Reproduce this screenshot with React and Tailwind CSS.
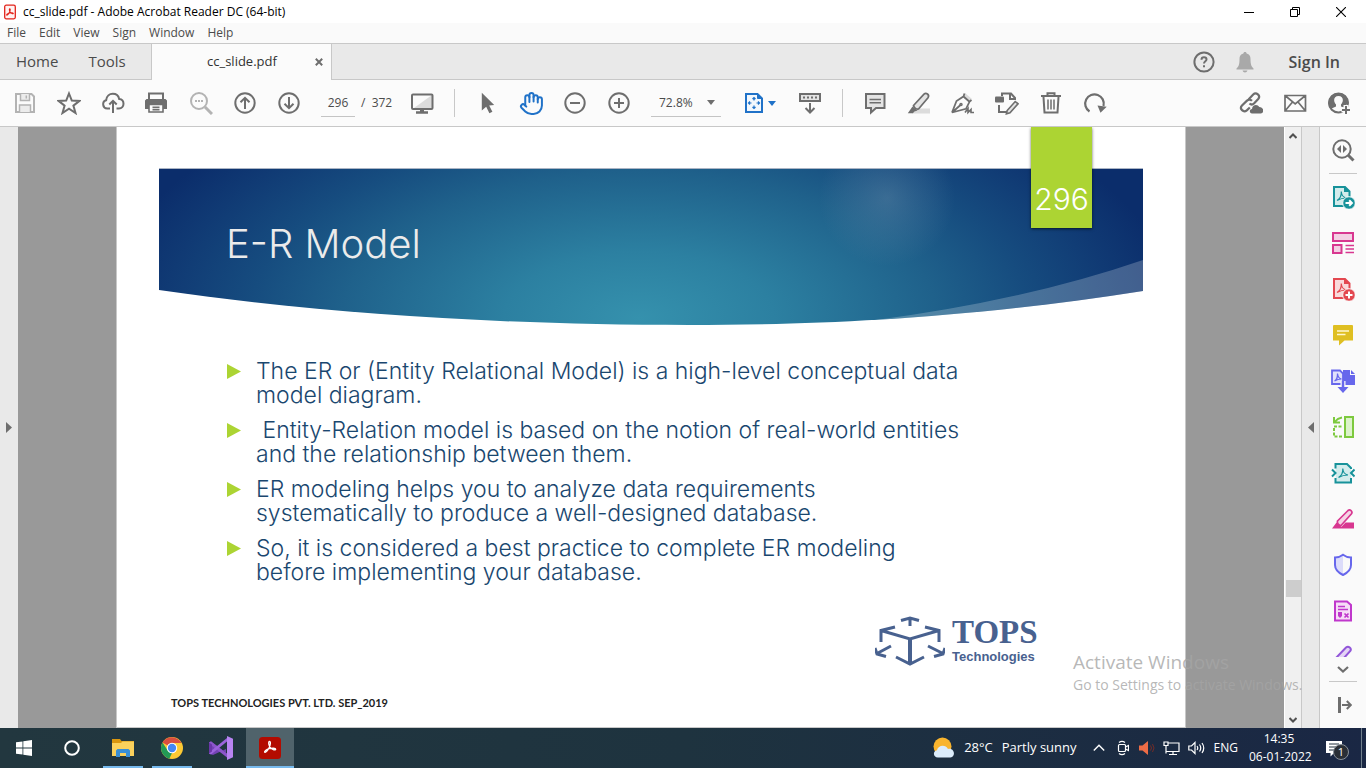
import React from "react";
import { Hand } from "lucide-react";

function Icon({ children, color = "#6e6e6e", size = 24, className = "" }) {
  return (
    <svg
      width={size}
      height={size}
      viewBox="0 0 24 24"
      fill="none"
      stroke={color}
      strokeWidth="2"
      className={"shrink-0 " + className}
      aria-hidden="true"
    >
      {children}
    </svg>
  );
}

function ToolButton({ label, children }) {
  return (
    <button type="button" aria-label={label} className="flex h-10 w-11 shrink-0 items-center justify-center">
      {children}
    </button>
  );
}

function TitleBar() {
  return (
    <header className="flex h-[23px] shrink-0 items-center justify-between bg-white">
      <div className="flex items-center gap-[7px] pl-1">
        <svg width="12" height="16" viewBox="0 0 12 16" aria-hidden="true">
          <rect x="0.7" y="1.200" width="10.600" height="13.600" rx="1.500" fill="#fff3f2" stroke="#e2231a" strokeWidth="1.300" />
          <path d="M5.700 4.800c1 0 .4 2.600-.5 4-1 1.700-2 2.600-2.500 2.200-.4-.6 1.500-1.700 3-2 1.800-.3 3.600-.2 3.600.5s-1.800.2-2.800-1C5.500 7.500 5 4.800 5.700 4.800z" fill="none" stroke="#e2231a" strokeWidth="1.100" />
        </svg>
        <h1 className="text-[12px] leading-4 text-black">cc_slide.pdf - Adobe Acrobat Reader DC (64-bit)</h1>
      </div>
      <div className="flex items-center pr-[2px]">
        <button type="button" aria-label="Minimize" className="flex h-[22px] w-[46px] items-center justify-center">
          <svg width="10" height="10" stroke="#000" aria-hidden="true"><path d="M0 5.500h10" /></svg>
        </button>
        <button type="button" aria-label="Restore" className="flex h-[22px] w-[46px] items-center justify-center">
          <svg width="10" height="10" stroke="#000" fill="none" aria-hidden="true">
            <path d="M.5 2.500h7v7h-7zM2.500 2.500v-2h7v7h-2" />
          </svg>
        </button>
        <button type="button" aria-label="Close" className="flex h-[22px] w-[46px] items-center justify-center">
          <svg width="10" height="10" stroke="#000" strokeWidth="1.100" aria-hidden="true"><path d="M0 0l10 10M10 0L0 10" /></svg>
        </button>
      </div>
    </header>
  );
}

function MenuBar() {
  return (
    <nav className="flex h-5 shrink-0 items-center gap-[13px] bg-[#fafafa] pl-[7px] text-[12px] leading-4 text-[#4b4b4b]">
      {["File", "Edit", "View", "Sign", "Window", "Help"].map((item) => (
        <button type="button" key={item}>{item}</button>
      ))}
    </nav>
  );
}

function TabBar() {
  return (
    <div className="flex h-[37px] shrink-0 border-t border-[#c8c8c8] bg-[#e9e9e9] text-[#4b4b4b]">
      <div className="flex w-[151px] items-center gap-[30px] border-b border-[#c8c8c8] pl-4 text-[15px]">
        <button type="button">Home</button>
        <button type="button">Tools</button>
      </div>
      <div className="flex w-[181px] items-center border-x border-[#c8c8c8] bg-[#fbfbfb] pr-[6px] pl-[55px]">
        <span className="flex-1 text-[13px] text-[#323232]">cc_slide.pdf</span>
        <button type="button" aria-label="Close tab" className="flex size-3 items-center justify-center">
          <svg width="8" height="8" stroke="#6e6e6e" strokeWidth="2" aria-hidden="true"><path d="M.8.8l6.400 6.400M7.200.8L.8 7.200" /></svg>
        </button>
      </div>
      <div className="flex flex-1 items-center justify-end border-b border-[#c8c8c8] pr-[26px]">
        <button type="button" aria-label="Help" className="mr-[17px]">
          <Icon>
            <circle cx="12" cy="12" r="9.600" />
            <path d="M9.500 9.700c0-3.200 5-3 5-.2 0 1.800-2.500 1.900-2.500 4" />
            <path d="M12 15.300v2" />
          </Icon>
        </button>
        <button type="button" aria-label="Notifications" className="mr-8">
          <Icon color="none">
            <path fill="#a9a9a9" d="M12 2c1 0 1.600.7 1.600 1.600C16.500 4.400 17.500 6.500 17.500 9c0 6 1 7.500 3 9.500v1h-17v-1c2-2 3-3.500 3-9.500 0-2.500 1-4.600 3.900-5.400C10.400 2.700 11 2 12 2zM9.500 20.500h5c-.5 1.300-1.300 2-2.500 2s-2-.7-2.500-2z" />
          </Icon>
        </button>
        <button type="button" className="text-[16px] font-semibold">Sign In</button>
      </div>
    </div>
  );
}

function Toolbar() {
  return (
    <div className="flex h-[47px] shrink-0 items-center overflow-hidden border-b border-[#c8c8c8] bg-[#fbfbfb] pl-[3px] text-[12px] text-[#4b4b4b]">
      <ToolButton label="Save">
        <Icon color="#b3b3b3">
          <path d="M3 3h15.500L21 5.500V21H3z" />
          <path fill="#ececec" strokeWidth="1.500" d="M7.500 3v6.500h9V3M6.500 21v-7h11v7" />
          <path strokeWidth="1.500" d="M13.300 4.500v3" />
        </Icon>
      </ToolButton>
      <ToolButton label="Add to favourites">
        <Icon><path d="M12 2.500l2.800 7.100 7.600.3-6 4.700 2.100 7.400L12 17.700 5.500 22l2.100-7.400-6-4.700 7.600-.3z" /></Icon>
      </ToolButton>
      <ToolButton label="Upload">
        <Icon>
          <path d="M9 17.500H6.200a4.200 4.200 0 0 1-1.100-8.200C5.500 5 8.500 2.800 11.800 2.800c3.400 0 5.700 2 6.400 5.200 2.500.2 4.300 2.200 4.300 4.800s-1.800 4.700-4.500 4.700h-2.500" />
          <path d="M12 22V9.800M8.300 13.500l3.700-3.700 3.700 3.700" />
        </Icon>
      </ToolButton>
      <ToolButton label="Print">
        <Icon>
          <path d="M4 8V2.500h14V8" />
          <path fill="#6e6e6e" stroke="none" d="M1.500 8h19L22 9.500V18h-4v-4H4v4H0V9.500z" />
          <path d="M4 13.500h14V21H4zM7.500 16.300h7M7.500 18.600h7" strokeWidth="1.600" />
        </Icon>
      </ToolButton>
      <ToolButton label="Find text">
        <Icon color="#b3b3b3">
          <circle cx="10" cy="10" r="8" />
          <path d="M6 10h2M9 10h2M12 10h2" />
          <path strokeWidth="3" d="M16 16l7 7" />
        </Icon>
      </ToolButton>
      <ToolButton label="Previous page">
        <Icon><circle cx="12" cy="12" r="9.700" /><path d="M12 18V7M7.500 11.300L12 6.800l4.500 4.500" /></Icon>
      </ToolButton>
      <ToolButton label="Next page">
        <Icon><circle cx="12" cy="12" r="9.700" /><path d="M12 6v11M7.500 12.700l4.500 4.500 4.500-4.500" /></Icon>
      </ToolButton>
      <div className="ml-[10px] flex items-center">
        <input aria-label="Page number" defaultValue="296" className="h-7 w-[34px] border-b border-[#c4c4c4] bg-transparent text-center" />
        <span className="ml-[6px] w-[31px] whitespace-pre">/  372</span>
      </div>
      <div className="ml-2">
        <ToolButton label="Read mode">
          <Icon>
            <path fill="#dcdcdc" stroke="none" d="M22 4v13H4z" />
            <rect x="2" y="3.500" width="20.500" height="14.500" rx="1" />
            <path strokeWidth="2.500" d="M6 21.500h12" /><path strokeWidth="4" d="M12 18v3" />
          </Icon>
        </ToolButton>
      </div>
      <div className="ml-[10px] h-7 w-px shrink-0 bg-[#c8c8c8]" />
      <div className="ml-[10px] flex">
        <ToolButton label="Select">
          <Icon><path fill="#6e6e6e" stroke="none" d="M6.800 1.800l12.400 12.300-5 .4 3.200 6.200-3 1.500-3.200-6.400-4.400 3.600z" /></Icon>
        </ToolButton>
        <ToolButton label="Pan"><Hand size={25} color="#2072c8" strokeWidth={1.900} aria-hidden="true" /></ToolButton>
        <ToolButton label="Zoom out"><Icon><circle cx="12" cy="12" r="9.700" /><path d="M7 12h10" /></Icon></ToolButton>
        <ToolButton label="Zoom in"><Icon><circle cx="12" cy="12" r="9.700" /><path d="M7 12h10M12 7v10" /></Icon></ToolButton>
      </div>
      <div className="ml-[10px] flex h-7 w-[70px] items-center border-b border-[#c4c4c4]">
        <select aria-label="Zoom level" defaultValue="72.8%" className="w-[52px] appearance-none bg-transparent pl-2">
          <option>72.8%</option>
          <option>100%</option>
        </select>
        <svg width="8" height="5" className="ml-1" fill="#6e6e6e" aria-hidden="true"><path d="M0 0h8L4 5z" /></svg>
      </div>
      <button type="button" aria-label="Fit page" className="ml-[21px] flex h-10 items-center gap-[2px]">
        <Icon color="#2072c8">
          <path fill="#f3f8fd" d="M4 3h11.500L20 7.500V21H4z" />
          <path fill="#2072c8" d="M15.500 3v4.500H20" strokeWidth="1" />
          <path strokeWidth="1.200" d="M12 6.500v3M12 14.500v3M6.500 12h3M14.500 12h3M10.500 8L12 6.500 13.500 8M10.500 16l1.500 1.500 1.500-1.500M8 10.500L6.500 12 8 13.500M16 10.500l1.500 1.500-1.500 1.500" />
        </Icon>
        <svg width="8" height="5" fill="#2072c8" aria-hidden="true"><path d="M0 0h8L4 5z" /></svg>
      </button>
      <div className="ml-3">
        <ToolButton label="Scroll mode">
          <Icon>
            <path fill="#e4e4e4" d="M2 3h20v7H2z" />
            <path d="M5 6.500h2M9 6.500h2M13 6.500h2M17 6.500h2" />
            <path d="M12 12v9M7.500 17l4.500 4.500 4.500-4.500" />
          </Icon>
        </ToolButton>
      </div>
      <div className="ml-[10px] h-7 w-px shrink-0 bg-[#c8c8c8]" />
      <div className="ml-[10px] flex">
        <ToolButton label="Comment">
          <Icon>
            <path fill="#e4e4e4" d="M3 3h18.500v14H13l-5 4.500V17H3z" />
            <path strokeWidth="1.400" d="M6.500 8.500h11.500M6.500 11.800h11.500" />
          </Icon>
        </ToolButton>
        <ToolButton label="Highlight">
          <Icon>
            <path fill="#dcdcdc" stroke="none" d="M5 22.500l6-5h12v5z" />
            <path fill="#e4e4e4" strokeWidth="1.700" d="M6.500 14.500L17 3.200c2-2 6 .3 4 3.600L11.500 18c-2 .5-4.500-1-5-3.500z" />
            <path fill="#6e6e6e" stroke="none" d="M5.500 15.500l5 4-3 .9-1.700 1.800H.8z" />
          </Icon>
        </ToolButton>
        <ToolButton label="Draw signature">
          <Icon>
            <path fill="#dcdcdc" stroke="none" d="M14 2l7 6-3 3-6-6z" />
            <path strokeWidth="1.800" d="M1 21.500L5.500 10l7-4.500 6 5.300-3.500 7-14 3.700L9.500 14M13.500 2.500l-1 3M18 11l2.500-2" />
            <circle cx="10" cy="13.500" r="1" strokeWidth="1.500" />
            <path strokeWidth="1.600" d="M14 21.500l3-4v4l3-3v3h3" />
          </Icon>
        </ToolButton>
        <ToolButton label="Fill and sign">
          <Icon>
            <path d="M7 5V2.500h9L20 7v2M15 3v5h5M4 14v7h8" />
            <rect x="0" y="5.500" width="9" height="6" rx="1" fill="#6e6e6e" stroke="none" />
            <path fill="#e4e4e4" strokeWidth="1.600" d="M12.200 19.500l8-9 2.800 2.300-8 9-3.600 1z" />
          </Icon>
        </ToolButton>
        <ToolButton label="Delete">
          <Icon>
            <path d="M2 5h20M8.500 4.500V2.300h7v2.200M4.500 6l1 15.500h13l1-15.500" />
            <path strokeWidth="1.500" d="M9 8.500v10M12 8.500v10M15 8.500v10" />
          </Icon>
        </ToolButton>
        <ToolButton label="Rotate">
          <Icon>
            <path strokeWidth="2.200" d="M6.500 20.500A9.300 9.300 0 1 1 20.500 15" />
            <path fill="#6e6e6e" stroke="none" d="M14.500 14.500l9.200 1.200-6.200 6z" />
          </Icon>
        </ToolButton>
      </div>
      <div className="ml-auto flex pr-[5px]">
        <ToolButton label="Share link">
          <Icon>
            <path d="M9.500 8.500l4.700-5c3-2.900 7.800 1.200 5 4.500l-4 4.300c-1.500 1.500-3.500 1.300-4.700.2M13 9.800c-1.500-1.500-3.500-1.500-5-.2l-5 4.900c-3 3.300 1.500 7.500 4.800 4.800l3-2.800" strokeWidth="2.200" />
            <path fill="#6e6e6e" stroke="none" d="M13 22.500c-2.800-.3-3-4 0-4.500.2-4.500 5.500-5.500 7.300-2 5 0 5 6.500 1.500 6.500z" />
          </Icon>
        </ToolButton>
        <ToolButton label="Send by email">
          <Icon><path strokeWidth="1.700" d="M2 4.500h20.500v15.500H2zM2 4.500l10.200 8.500 10.300-8.500M2 20l7.500-9M22.500 20L15 11" /></Icon>
        </ToolButton>
        <ToolButton label="Invite people">
          <Icon>
            <circle cx="11.500" cy="12" r="9.500" />
            <path fill="#6e6e6e" stroke="none" d="M11.500 2a10 10 0 0 0-8 16l5.500-2.500v-2c-3-3.500-2.500-8.500 2.500-8.500s5.500 5 2.500 8.500v2l3 1 4.500-5A10 10 0 0 0 11.500 2z" />
            <path stroke="#fbfbfb" strokeWidth="5" d="M19 14v10M14.500 19h10" />
            <path d="M19 15v8M15 19h8" />
          </Icon>
        </ToolButton>
      </div>
    </div>
  );
}

const bullets = [
  "The ER or (Entity Relational Model) is a high-level conceptual data\nmodel diagram.",
  "\u00a0Entity-Relation model is based on the notion of real-world entities\nand the relationship between them.",
  "ER modeling helps you to analyze data requirements\nsystematically to produce a well-designed database.",
  "So, it is considered a best practice to complete ER modeling\nbefore implementing your database.",
];

function Slide() {
  return (
    <article className="relative mx-[98px] flex-1 overflow-hidden border-x border-b border-[#c8c8c8] bg-white">
      <header className="relative mx-[42px] mt-[41px] h-[158px] pt-[52px] pl-[67px]">
        <svg className="absolute inset-0 size-full" viewBox="0 0 984 158" preserveAspectRatio="none" aria-hidden="true">
          <defs>
            <radialGradient id="sea" gradientUnits="userSpaceOnUse" cx="0" cy="0" r="1" gradientTransform="translate(480 150) scale(540 265)">
              <stop offset="0" stopColor="#3591ad" />
              <stop offset="0.25" stopColor="#2c80a1" />
              <stop offset="0.55" stopColor="#1f618b" />
              <stop offset="0.72" stopColor="#164c7f" />
              <stop offset="0.88" stopColor="#103a74" />
              <stop offset="1" stopColor="#0b2d6b" />
            </radialGradient>
            <radialGradient id="glow" gradientUnits="userSpaceOnUse" cx="728" cy="30" r="68">
              <stop offset="0" stopColor="#7f9db5" stopOpacity="0.32" />
              <stop offset="0.6" stopColor="#6f93b0" stopOpacity="0.15" />
              <stop offset="1" stopColor="#6f93b0" stopOpacity="0" />
            </radialGradient>
            <clipPath id="banner">
              <path d="M0 0H984V123C800 152 650 157 530 157C330 157 150 144 0 122z" />
            </clipPath>
          </defs>
          <g clipPath="url(#banner)">
            <path fill="url(#sea)" d="M0 0h984v158H0z" />
            <path fill="url(#glow)" d="M640 0h180v110H640z" />
            <path fill="#fff" fillOpacity="0.22" d="M710 153Q865 133 984 92V158H710z" />
            <path fill="#aab4c4" d="M0 0h984v1H0z" />
          </g>
        </svg>
        <h2 className="relative font-['Inter',sans-serif] text-[40px] leading-12 font-light text-[#ebebeb]">E-R Model</h2>
      </header>
      <div className="absolute top-0 right-[93px] flex h-[101px] w-[61px] items-end justify-center bg-[#acd433] pb-[13px] font-['Inter',sans-serif] text-[30px] leading-8 font-light text-white shadow-sm shadow-black/50">
        296
      </div>
      <ul className="mt-[33px] ml-[110px] flex flex-col gap-[11px] font-['Inter',sans-serif] text-[23px] leading-6 font-light text-[#1a476f]">
        {bullets.map((text) => (
          <li key={text} className="flex">
            <svg width="14" height="15" className="mt-[5px] mr-[15px] shrink-0" fill="#acd433" aria-hidden="true"><path d="M0 0l14 7.500L0 15z" /></svg>
            <span className="whitespace-pre-line">{text}</span>
          </li>
        ))}
      </ul>
      <div className="mt-[32px] mr-[148px] flex items-center justify-end gap-[7px] text-[#48618f]">
        <svg width="70" height="51" viewBox="0 0 70 51" fill="none" stroke="#48618f" strokeWidth="3" aria-hidden="true">
          <path d="M6 14.500l29 8.500 29-8.500M20 11L6 14.500V26M50 11l14 3.500V26" />
          <path d="M35 23v25" strokeWidth="4" />
          <path d="M21 41l14 7 14-7M26 4.500l9-2.500 9 2.500M35 2v8M16 30L2 37.500M0 32l2 6 9 2.500M53 30l15 7.500M70 32l-2 6-9 2.500" />
        </svg>
        <div className="w-[85px]">
          <div className="font-['Liberation_Serif',serif] text-[33px] leading-[30px] font-bold">TOPS</div>
          <div className="font-['Liberation_Sans',sans-serif] text-[13px] leading-5 font-bold">Technologies</div>
        </div>
      </div>
      <p className="mt-[28px] ml-[54px] font-['Lato',sans-serif] text-[11px] leading-4 font-bold text-[#222]">TOPS TECHNOLOGIES PVT. LTD. SEP_2019</p>
    </article>
  );
}

function ScrollBar() {
  return (
    <div className="flex w-[17px] shrink-0 flex-col items-center border-r border-[#c8c8c8] bg-[#f0f0f0]">
      <svg width="8" height="6" className="mt-[6px]" fill="none" stroke="#505050" strokeWidth="2" aria-hidden="true"><path d="M.5 5L4 1.500 7.500 5" /></svg>
      <div className="mt-auto h-[17px] w-[15px] bg-[#cdcdcd]" />
      <svg width="8" height="6" className="mt-[120px] mb-[5px]" fill="none" stroke="#505050" strokeWidth="2" aria-hidden="true"><path d="M.5 1L4 4.500 7.500 1" /></svg>
    </div>
  );
}

const pdfBase = (color, tint) => (
  <>
    <path fill={tint} stroke={color} d="M3 2h11l4.500 4.500V21H3z" />
    <path fill={color} stroke="none" d="M13 1.500V7h6z" />
    <path d="M6 15.500c3.500-2 4.500-5 4.300-9 .4 4.500 1.700 6 5.200 6.500-3.500 0-6 .5-9.500 2.500z" stroke={color} strokeWidth="1.200" />
  </>
);

const sideTools = [
  ["Export PDF", <>{pdfBase("#17929a", "#d3ecec")}<circle cx="18" cy="18" r="6.300" fill="#17929a" stroke="#fafafa" strokeWidth="1" /><path stroke="#fff" d="M14.500 18h6M18.200 15.300l2.700 2.700-2.700 2.700" /></>],
  ["Edit PDF", <g stroke="#d83790"><path fill="#f3d0e4" d="M2 2h20v8H2zM2 14h8.500v8H2z" /><path strokeWidth="1.300" d="M14.500 14.500H23M14.500 18H23M14.500 21.500H23" /></g>],
  ["Create PDF", <>{pdfBase("#e34850", "#f9d9da")}<circle cx="18" cy="18" r="6.300" fill="#e34850" stroke="#fafafa" strokeWidth="1" /><path stroke="#fff" d="M14.500 18h7M18 14.500v7" /></>],
  ["Comment", <><path fill="#dfbf22" stroke="none" d="M3 2h18a1 1 0 0 1 1 1v14.500H13.500L8 22.500v-5H2V3a1 1 0 0 1 1-1z" /><path stroke="#fff8d0" strokeWidth="1.500" d="M6 8h12M6 11.500h8.500" /></>],
  ["Combine files", <g stroke="#6767ec"><path fill="#6767ec" stroke="none" d="M12 1h7v5h5v10H12z" /><path fill="#6767ec" stroke="none" d="M20 1l4 4h-4z" /><path fill="#e1e1fb" strokeWidth="1.800" d="M1 1.500h8l3 3V15H1z" /><path strokeWidth="1.200" d="M3.500 12c3-1.500 3-4 3-7.500.5 4 1.500 5 4 5.500-3 0-4.500.5-7 2z" /><path stroke="#fafafa" strokeWidth="5" d="M12 12v7" /><path strokeWidth="2.500" d="M12 12v8" /><path fill="#6767ec" stroke="none" d="M6.500 18h11L12 24z" /></g>],
  ["Organize pages", <g stroke="#7dc93e"><path fill="#dcf3ca" d="M14 2h8v20h-8z" /><path strokeDasharray="3 1.500" d="M11 21.500H3V13M3 11.500h7.500" /><path d="M11 2.500C8 3 6 4 4 6.500M3 2v5.500h6" /></g>],
  ["Compress PDF", <g stroke="#17929a"><path fill="#d3ecec" stroke="none" d="M4.500 3H16l4 4v14h-15z" /><path d="M4.500 7.500V3H16l4 4v1M4.500 17v4.500H20V17" /><path d="M7.500 16.500c3.500-2 4.500-5 4.300-9 .4 4.500 1.700 6 5.200 6.500-3.500 0-6 .5-9.500 2.500z" strokeWidth="1.200" /><path d="M1 8.500L4.500 12 1 15.500M23.500 8.500L20 12l3.500 3.500" /></g>],
  ["Redact", <g stroke="#d83790"><path fill="#d83790" stroke="none" d="M1 21.500l4.500-6 5 4.200 4-4.200h8.500v6z" /><path fill="#f5d4e6" strokeWidth="1.700" d="M6.500 14L17 3.500c2-1.800 5 .8 3.500 3.200L10 18.500c-1.800.2-4-1.500-3.500-4.500z" /></g>],
  ["Protect", <><path fill="#dcdcfa" stroke="none" d="M12 2v20C6 19 4 16 4 12V5c3 0 5-1 8-3z" /><path stroke="#6767ec" d="M12 1.800c2.500 1.900 5 2.700 8 2.700V12c0 4.500-3 7.500-8 10-5-2.500-8-5.500-8-10V4.500c3 0 5.500-.8 8-2.700z" /></>],
  ["Prepare form", <g stroke="#c038cc"><path fill="#f6dcf7" d="M4 2.500h12L20 6v15.500H4z" /><path strokeWidth="1.500" d="M7 7.500h7M7 10.500h10" /><path fill="#c038cc" stroke="none" d="M7 13h4v4l-2 2-2-2z" /><path strokeWidth="1.700" d="M13.500 14.500l4 4M17.500 14.500l-4 4" /></g>],
];

function SideTools() {
  return (
    <aside className="flex w-[47px] shrink-0 flex-col items-center border-l border-[#c8c8c8] bg-[#fafafa]">
      <button type="button" aria-label="Search tools" className="flex h-[46px] w-full shrink-0 items-center justify-center">
        <Icon>
          <circle cx="11" cy="11" r="8.700" />
          <path fill="#6e6e6e" stroke="none" d="M10 7v8l-4-4zM12 7v8l4-4z" />
          <path strokeWidth="3" d="M17 17l5.500 5.500" />
        </Icon>
      </button>
      <div className="h-px w-7 shrink-0 bg-[#c8c8c8]" />
      {sideTools.map(([label, art]) => (
        <button type="button" key={label} aria-label={label} className="flex h-[46px] w-full shrink-0 items-center justify-center">
          <Icon>{art}</Icon>
        </button>
      ))}
      <button type="button" aria-label="Fill and sign" className="flex h-[23px] w-full shrink-0 items-end justify-center overflow-hidden">
        <svg width="24" height="12" viewBox="0 0 24 12" fill="#e4d4f5" stroke="#9256d9" strokeWidth="2" aria-hidden="true"><path d="M4 14L15 2.500c2.500-2 6 .8 4.300 3.500L12 14z" /></svg>
      </button>
      <button type="button" aria-label="More tools" className="flex h-[24px] w-full shrink-0 items-center justify-center">
        <svg width="12" height="7" fill="none" stroke="#6e6e6e" strokeWidth="2.200" aria-hidden="true"><path d="M1 1l5 4.500L11 1" /></svg>
      </button>
      <div className="h-px w-7 shrink-0 bg-[#c8c8c8]" />
      <button type="button" aria-label="Collapse pane" className="flex w-full flex-1 items-center justify-center">
        <svg width="14" height="16" className="ml-1" fill="none" stroke="#6e6e6e" strokeWidth="2" aria-hidden="true"><path strokeWidth="3" d="M1.500 0v16" /><path d="M4 8h9M8.800 4l4 4-4 4" /></svg>
      </button>
    </aside>
  );
}

function TaskButton({ label, open, active, children }) {
  return (
    <button
      type="button"
      aria-label={label}
      className={"flex h-full w-12 flex-col items-center " + (active ? "bg-[#50636b]" : "")}
    >
      <span className="flex flex-1 items-center pt-px">{children}</span>
      <span className={"h-[2px] " + (active ? "w-12 bg-[#76b9ed]" : open ? "w-10 bg-[#76b9ed]" : "w-10")} />
    </button>
  );
}

function TaskBar() {
  return (
    <footer className="flex h-10 shrink-0 items-center bg-linear-to-r from-[#22373f] via-[#1e333f] to-[#1a2744] text-[12px] text-white">
      <TaskButton label="Start">
        <svg width="16" height="16" viewBox="0 0 16 16" fill="#fff" aria-hidden="true"><path d="M0 2.300l6.500-.9v6.200H0zM7.300 1.300L16 0v7.600H7.300zM0 8.400h6.500v6.200L0 13.700zM7.300 8.400H16V16l-8.700-1.300z" /></svg>
      </TaskButton>
      <TaskButton label="Cortana">
        <svg width="16" height="16" fill="none" stroke="#fff" strokeWidth="2" aria-hidden="true"><circle cx="8" cy="8" r="6.800" /></svg>
      </TaskButton>
      <div className="ml-[3px] flex h-full gap-px">
        <TaskButton label="File Explorer" open>
          <svg width="22" height="18" viewBox="0 0 22 18" aria-hidden="true">
            <path fill="#d9960f" d="M0 0h8l1.500 2H22v6H0z" />
            <path fill="#fbd15c" d="M0 4h9l1.500-1.500H22V17H0z" />
            <path fill="#3a8fd4" d="M4 18v-6.500l1.500-1.500h11l1.500 1.500V18h-4v-4H8v4z" />
          </svg>
        </TaskButton>
        <TaskButton label="Chrome" open>
          <svg width="22" height="22" viewBox="0 0 22 22" aria-hidden="true">
            <circle cx="11" cy="11" r="11" fill="#fcc934" />
            <path fill="#d94e3f" d="M11 11L1.500 5.500a11 11 0 0 1 19 .5H11z" />
            <path fill="#229a56" d="M1.500 5.500l5.200 8L11 16l-2.700 5.700A11 11 0 0 1 1.500 5.500z" />
            <circle cx="11" cy="11" r="5.200" fill="#fff" /><circle cx="11" cy="11" r="4.200" fill="#4486f4" />
          </svg>
        </TaskButton>
        <TaskButton label="Visual Studio">
          <svg width="24" height="24" viewBox="0 0 24 24" aria-hidden="true">
            <path fill="#7443b5" d="M0 6.500l2-1.200L17 17v-4L4 19l-4-1.500z" />
            <path fill="#8d55cc" d="M0 6.500l2-1 16 12v4L0 7.500z" />
            <path fill="#9b63dc" d="M0 17.500l2 1 16-13V2L0 16.500z" />
            <path fill="#6b36a8" d="M0 6.500l3 2v7l-3 2z" />
            <path fill="#b884f2" d="M18 0l6 2.800v18.400L18 24z" />
          </svg>
        </TaskButton>
        <TaskButton label="Acrobat Reader" active>
          <svg width="22" height="22" viewBox="0 0 22 22" aria-hidden="true">
            <rect width="22" height="22" rx="3.500" fill="#b30b00" />
            <path d="M10.500 4.500c1.500 0 .9 3.600-.4 6.200-1.300 2.600-3.200 5.200-4.300 4.600-1-.8 1.600-3 4.300-3.600 3-.7 6.600-.7 6.600.6 0 1.300-3.300.6-5-1.400C9.800 9.300 9 4.500 10.500 4.500z" fill="none" stroke="#fff" strokeWidth="1.300" />
          </svg>
        </TaskButton>
      </div>
      <div className="ml-auto flex h-full items-center">
        <svg width="22" height="22" viewBox="0 0 22 22" aria-hidden="true">
          <circle cx="9.500" cy="9.500" r="9" fill="#f9b42d" />
          <path fill="#dcecfb" d="M5 20.500c-5 0-5.500-6.500-1-7.300C5 8 12.500 7 15 12c6-1.500 8.500 7 2.500 8.500z" />
        </svg>
        <span className="ml-[9px] text-[13px]">28°C</span>
        <span className="ml-[9px] text-[13px]">Partly sunny</span>
        <svg width="12" height="8" className="ml-4" fill="none" stroke="#fff" strokeWidth="1.400" aria-hidden="true"><path d="M.8 6.500L6 1.200l5.200 5.300" /></svg>
        <svg width="12" height="16" className="ml-3" fill="none" stroke="#fff" strokeWidth="1.200" aria-hidden="true"><rect x="1.500" y="4.500" width="7" height="7" rx="1" /><path d="M8.500 7l3-1.500v5L8.500 9M2 2.500c2-1.500 4-1.500 6 0M2 13.500c2 1.500 4 1.500 6 0" /></svg>
        <svg width="16" height="16" className="ml-[10px]" fill="none" aria-hidden="true"><path fill="#ec6c46" d="M0 5.500h3.500L9 1v14l-5.500-4.500H0z" /><path stroke="#742b27" d="M11.500 5.500q2 2.500 0 5M13.500 4q3 4 0 8" /></svg>
        <svg width="17" height="16" className="ml-2" fill="none" stroke="#fff" strokeWidth="1.200" aria-hidden="true"><path d="M5 3h11v8.500H3M10 11.500V14M6 14.500h8" /><path d="M1 2h4v3.500H1zM3 5.500v8" /></svg>
        <svg width="17" height="14" className="ml-2" fill="none" stroke="#fff" strokeWidth="1.200" aria-hidden="true"><path d="M.8 5h2.700L7 1.500v11L3.500 9H.8zM9 5q1.500 2 0 4M11.500 3.500q2.500 3.500 0 7M14 2q3.500 5 0 10" /></svg>
        <span className="ml-[9px]">ENG</span>
        <div className="ml-[11px] w-[60px] text-center leading-[18px] whitespace-nowrap">
          <div>14:35</div>
          <div>06-01-2022</div>
        </div>
        <button type="button" aria-label="Notifications, 1 new" className="relative ml-4 h-6 w-6">
          <svg width="18" height="18" viewBox="0 0 18 18" aria-hidden="true"><path fill="#fff" d="M1 2h16v12h-8l-3.500 3.500V14H1z" /><path stroke="#20303f" d="M4 5h10M4 8h10M4 11h7" /></svg>
          <span className="absolute top-2 left-2 flex size-4 items-center justify-center rounded-full border border-[#8b929a] bg-[#2a2f36] text-[11px] leading-3">1</span>
        </button>
        <div className="ml-3 h-full w-px bg-[#71808c]" />
        <div className="w-1" />
      </div>
    </footer>
  );
}

export default function App() {
  return (
    <div className="relative flex h-screen flex-col overflow-hidden bg-white font-['Open_Sans','Noto_Sans',sans-serif]">
      <TitleBar />
      <MenuBar />
      <TabBar />
      <Toolbar />
      <main className="flex min-h-0 flex-1">
        <button type="button" aria-label="Open navigation pane" className="flex w-[18px] shrink-0 items-center justify-center bg-[#e9e9e9]">
          <svg width="6" height="11" fill="#6e6e6e" aria-hidden="true"><path d="M0 0l6 5.500L0 11z" /></svg>
        </button>
        <div className="flex min-w-0 flex-1 border-r border-white bg-[#999]">
          <Slide />
        </div>
        <ScrollBar />
        <button type="button" aria-label="Close tools pane" className="flex w-[17px] shrink-0 items-center justify-center bg-[#e9e9e9]">
          <svg width="6" height="11" fill="#6e6e6e" aria-hidden="true"><path d="M6 0L0 5.500 6 11z" /></svg>
        </button>
        <SideTools />
      </main>
      <TaskBar />
      <div className="pointer-events-none absolute right-[56px] bottom-[72px] w-[237px] text-[#a5a5a5]/80">
        <div className="text-[19px] leading-6">Activate Windows</div>
        <div className="text-[14px] leading-[22px] whitespace-nowrap">Go to Settings to activate Windows.</div>
      </div>
    </div>
  );
}
